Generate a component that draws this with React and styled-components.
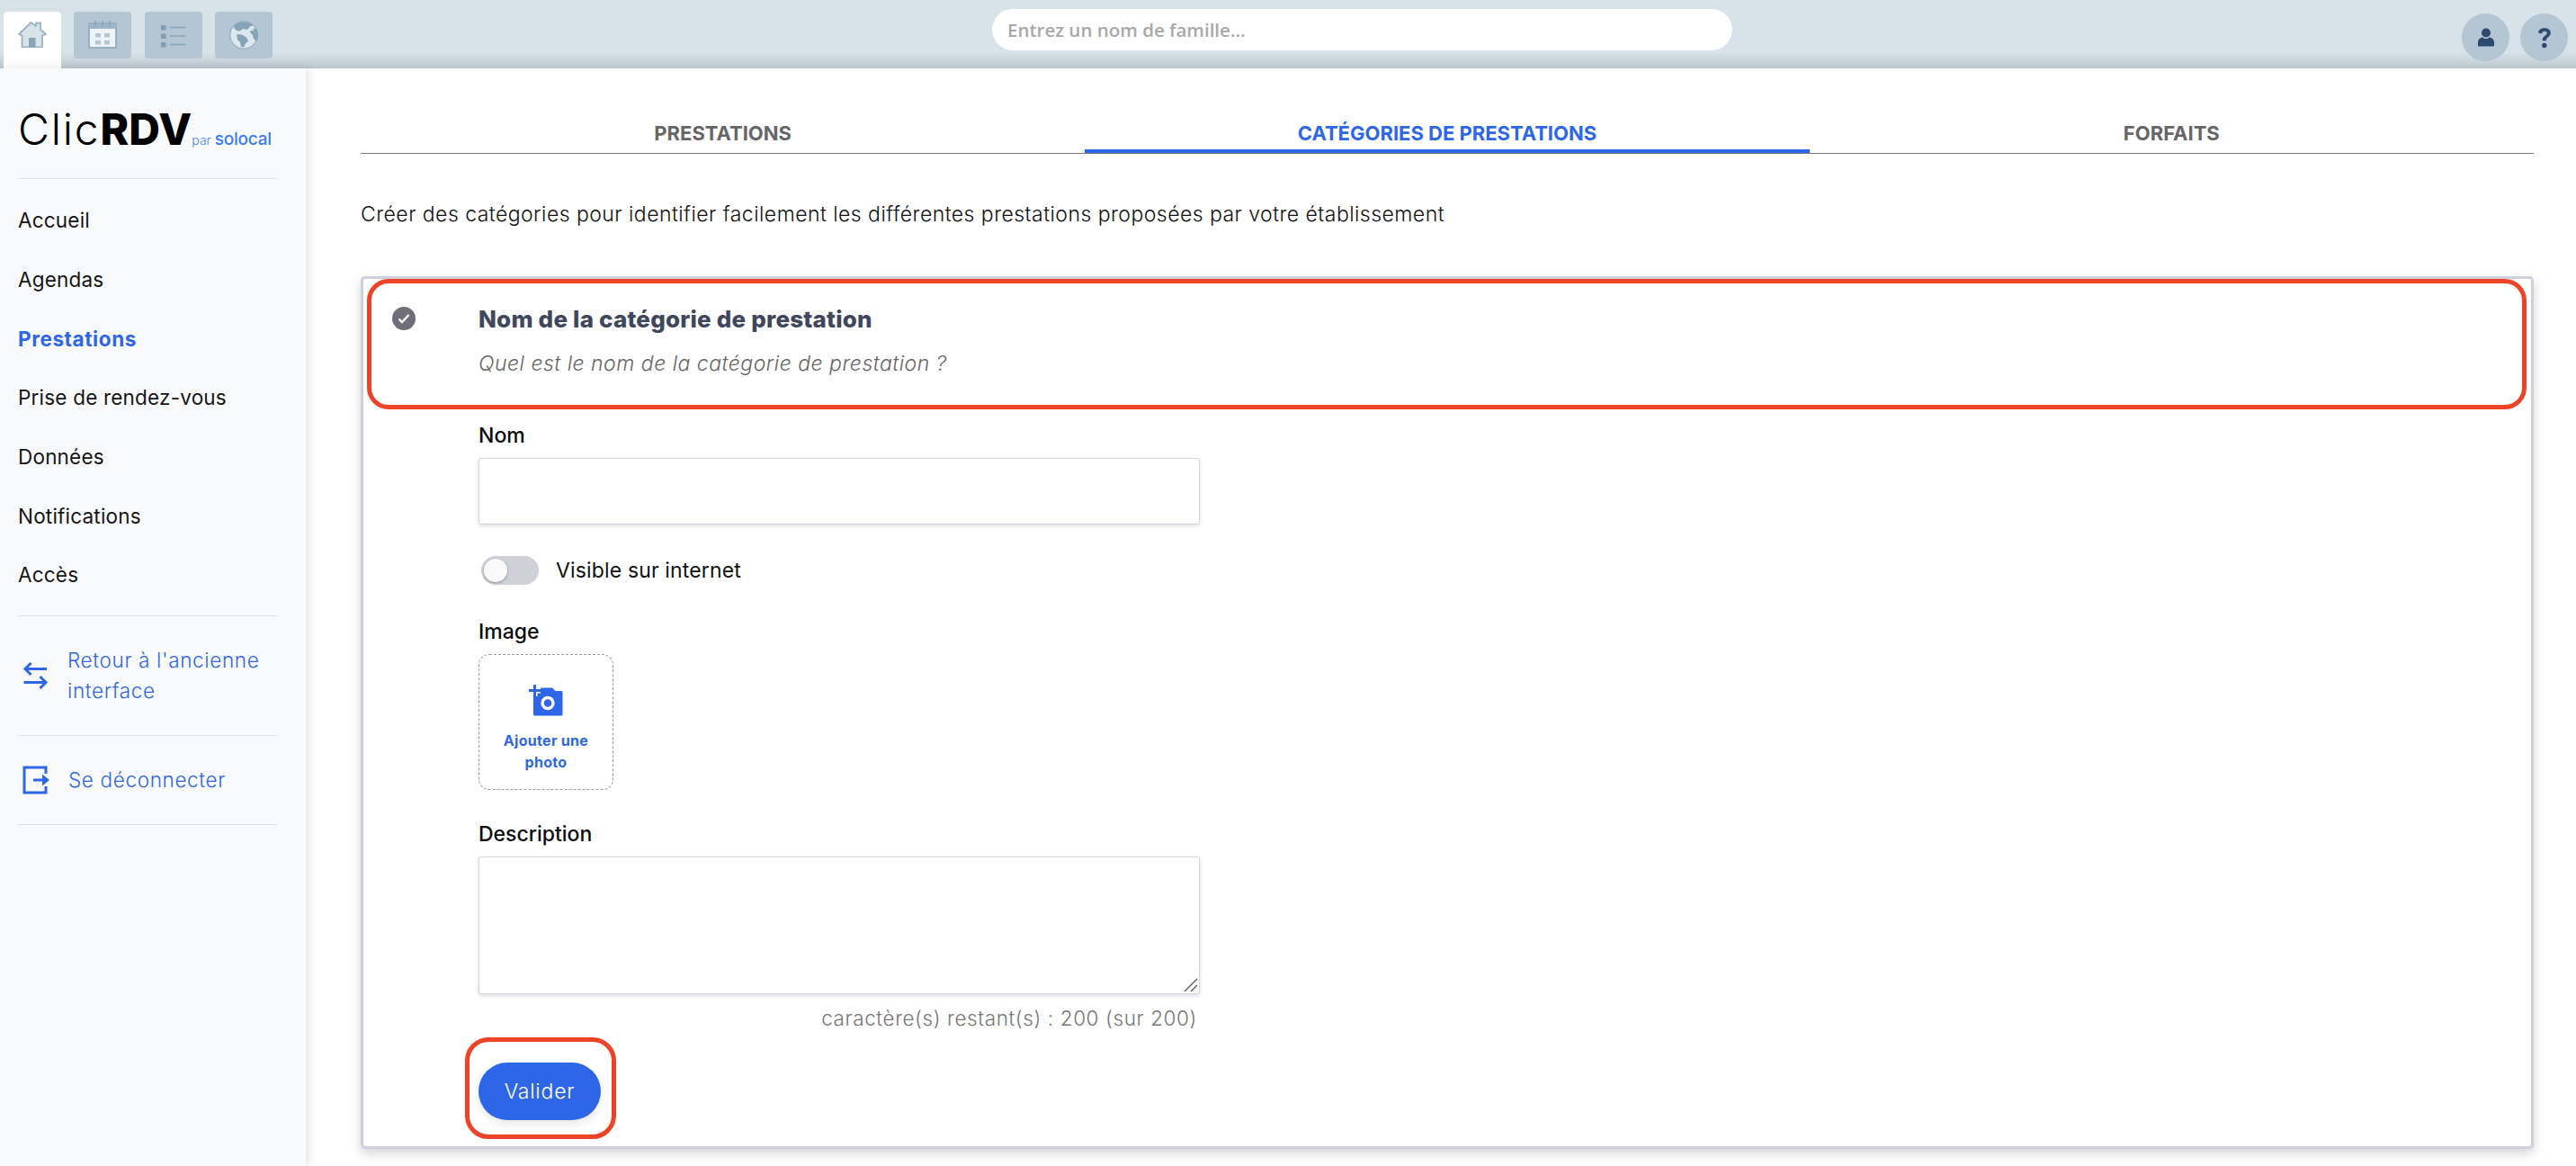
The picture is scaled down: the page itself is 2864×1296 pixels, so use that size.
import styled, { createGlobalStyle } from "styled-components";

const GlobalStyle = createGlobalStyle`
  html, body {
    margin: 0;
    padding: 0;
    background: #fff;
  }
  * {
    box-sizing: border-box;
  }
`;

const Page = styled.div`
  width: 2864px;
  height: 1296px;
  overflow: hidden;
  display: flex;
  flex-direction: column;
  font-family: Inter, "Noto Sans", sans-serif;
  color: #000;
`;

const TopBar = styled.header`
  flex: 0 0 76px;
  height: 76px;
  padding: 0 9px 0 4px;
  display: grid;
  grid-template-columns: 1099px 823px 1fr;
  background: linear-gradient(#d7e2e9 0, #d7e2e9 58px, #bcc7ce 76px);
`;

const TabIcons = styled.nav`
  display: flex;
  align-items: flex-start;
  gap: 14px;
  padding-top: 13px;
`;

const TabIcon = styled.div`
  width: 64px;
  height: ${(p) => (p.$active ? "63px" : "52px")};
  display: flex;
  align-items: flex-start;
  justify-content: center;
  padding-top: 10px;
  border-radius: ${(p) => (p.$active ? "4px 4px 0 0" : "4px")};
  background: ${(p) => (p.$active ? "#fff" : "#b4c6d3")};
  & + & + & {
    margin-left: 1px;
  }
  & + & + & + & {
    margin-left: 0;
  }
`;

const SearchWrap = styled.div`
  padding-top: 10px;
`;

const SearchBox = styled.div`
  height: 46px;
  border-radius: 23px;
  background: #fff;
  display: flex;
  align-items: center;
  padding-left: 17px;
  font-family: "Open Sans", sans-serif;
  font-size: 20.5px;
  font-weight: 600;
  color: #a8a8a8;
`;

const UserIcons = styled.div`
  display: flex;
  justify-content: flex-end;
  gap: 12px;
  padding-top: 15px;
`;

const RoundIcon = styled.div`
  width: 53px;
  height: 53px;
  border-radius: 50%;
  background: #b4c6d3;
  display: flex;
  align-items: center;
  justify-content: center;
`;

const Body = styled.div`
  flex: 1;
  display: flex;
  min-height: 0;
`;

const Sidebar = styled.aside`
  flex: 0 0 340px;
  padding: 0 32px 0 20px;
  background: #f9fafc;
  box-shadow: 3px 0 10px rgba(60, 60, 80, 0.14);
  display: flex;
  flex-direction: column;
`;

const Logo = styled.div`
  height: 123px;
  border-bottom: 1.5px solid #dfe0ea;
  display: flex;
  align-items: baseline;
  padding-top: 39px;
  font-size: 48px;
  line-height: 57px;
  white-space: nowrap;
`;

const LogoLight = styled.span`
  font-weight: 300;
  letter-spacing: 1.8px;
`;

const LogoBold = styled.span`
  font-weight: 800;
  letter-spacing: 0.2px;
`;

const LogoPar = styled.span`
  font-size: 14px;
  font-weight: 300;
  color: #4b82f0;
`;

const LogoBrand = styled.span`
  margin-left: 4px;
  font-size: 19px;
  font-weight: 500;
  letter-spacing: -0.2px;
  color: #3b7cf6;
`;

const NavList = styled.nav`
  display: flex;
  flex-direction: column;
  padding: 13px 0 12px;
  border-bottom: 1.5px solid #dfe0ea;
`;

const NavItem = styled.a`
  height: 65.7px;
  display: flex;
  align-items: center;
  font-size: 22.5px;
  letter-spacing: ${(p) => (p.$active ? "0.6px" : "0.2px")};
  font-weight: ${(p) => (p.$active ? 700 : 400)};
  color: ${(p) => (p.$active ? "#2e66e8" : "#151515")};
`;

const SideAction = styled.a`
  height: ${(p) => p.$h}px;
  display: flex;
  align-items: center;
  gap: 20px;
  padding-left: 5px;
  border-bottom: 1.5px solid #dfe0ea;
  font-size: 22.5px;
  font-weight: 300;
  line-height: 34px;
  letter-spacing: 0.65px;
  color: #2e66e8;
`;

const SideIconSlot = styled.span`
  flex: 0 0 30px;
  display: flex;
`;

const Main = styled.main`
  flex: 1;
  min-width: 0;
  padding: 50px 47px 0 61px;
`;

const Tabs = styled.div`
  display: grid;
  grid-template-columns: repeat(3, 1fr);
  border-bottom: 1.5px solid #777;
`;

const Tab = styled.div`
  height: 44px;
  margin-bottom: ${(p) => (p.$active ? "-1.5px" : "0")};
  padding-top: 7px;
  text-align: center;
  font-size: 22px;
  line-height: 30px;
  font-weight: 700;
  color: ${(p) => (p.$active ? "#2e66e8" : "#666")};
  border-bottom: ${(p) => (p.$active ? "4px solid #2e66e8" : "none")};
`;

const Intro = styled.p`
  margin: 50px 0 0;
  font-size: 23px;
  line-height: 34px;
  font-weight: 300;
  letter-spacing: 0.46px;
  color: #111;
`;

const Card = styled.section`
  margin-top: 52px;
  height: 970px;
  border: 3px solid #d0d0dc;
  border-radius: 5px;
  box-shadow: 0 5px 12px rgba(60, 60, 80, 0.22);
  background: #fff;
`;

const StepHeader = styled.div`
  position: relative;
  height: 145px;
  margin: 0 5px 0 4px;
  border: 5px solid #ee4326;
  border-radius: 24px;
  padding: 22px 0 0 119px;
`;

const StepDot = styled.div`
  position: absolute;
  left: 23px;
  top: 26px;
  width: 26px;
  height: 26px;
  border-radius: 50%;
  background: #6e6f78;
  display: flex;
  align-items: center;
  justify-content: center;
`;

const StepTitle = styled.h2`
  margin: 0;
  font-size: 26px;
  line-height: 36px;
  font-weight: 800;
  letter-spacing: 0.2px;
  color: #40475c;
`;

const StepHint = styled.p`
  margin: 14px 0 0;
  font-size: 23px;
  line-height: 34px;
  font-weight: 300;
  font-style: italic;
  letter-spacing: 0.5px;
  color: #666;
`;

const Form = styled.div`
  padding: 12px 0 0 128px;
  width: 930px;
  display: flex;
  flex-direction: column;
`;

const FieldLabel = styled.label`
  display: block;
  font-size: 23px;
  line-height: 34px;
  font-weight: 500;
  color: #0a0a0a;
`;

const TextInput = styled.div`
  margin-top: 8px;
  width: 802px;
  height: 74px;
  border: 1.5px solid #d5d5e0;
  border-radius: 3px;
  box-shadow: 0 2px 4px rgba(60, 60, 80, 0.14);
  background: #fff;
`;

const ToggleRow = styled.div`
  margin-top: 34px;
  display: flex;
  align-items: center;
  gap: 19px;
  padding-left: 3px;
`;

const ToggleTrack = styled.div`
  width: 64px;
  height: 32px;
  padding: 3px;
  border-radius: 16px;
  background: #d0d0d9;
`;

const ToggleKnob = styled.div`
  width: 26px;
  height: 26px;
  border-radius: 50%;
  background: #f9f9f9;
  box-shadow: 0 1px 3px rgba(0, 0, 0, 0.3);
`;

const ToggleLabel = styled.span`
  font-size: 23px;
  line-height: 34px;
  font-weight: 400;
  letter-spacing: 0.15px;
  color: #111;
`;

const ImageLabel = styled(FieldLabel)`
  margin-top: 34px;
`;

const PhotoDrop = styled.div`
  margin-top: 8px;
  width: 150px;
  height: 151px;
  border: 1.5px dashed #999;
  border-radius: 12px;
  display: flex;
  flex-direction: column;
  align-items: center;
  padding-top: 32px;
`;

const PhotoText = styled.div`
  margin-top: 15px;
  text-align: center;
  font-size: 16px;
  line-height: 24px;
  font-weight: 700;
  letter-spacing: 0.3px;
  color: #2e66e8;
`;

const DescriptionLabel = styled(FieldLabel)`
  margin-top: 32px;
`;

const TextArea = styled.div`
  position: relative;
  margin-top: 8px;
  width: 802px;
  height: 153px;
  border: 1.5px solid #d5d5e0;
  border-radius: 3px;
  box-shadow: 0 2px 4px rgba(60, 60, 80, 0.18);
  background: #fff;
`;

const Grip = styled.svg`
  position: absolute;
  right: 1px;
  bottom: 1px;
`;

const Counter = styled.div`
  width: 799px;
  margin-top: 10px;
  text-align: right;
  font-size: 22.5px;
  line-height: 34px;
  font-weight: 300;
  letter-spacing: 0.6px;
  color: #777;
`;

const ButtonFrame = styled.div`
  margin: 4px 0 0 -15px;
  width: 168px;
  height: 113px;
  border: 5px solid #ee4326;
  border-radius: 26px;
  padding: 23px 0 0 10px;
`;

const SubmitButton = styled.button`
  width: 136px;
  height: 64px;
  border: 0;
  border-radius: 32px;
  background: #2e66e8;
  color: #fff;
  font-family: inherit;
  font-size: 23px;
  font-weight: 300;
  letter-spacing: 0.8px;
  box-shadow: 0 4px 10px rgba(60, 60, 80, 0.12);
`;

const HomeIcon = () => (
  <svg width="32" height="30" viewBox="0 0 32 30">
    <path d="M1 15 14.500 2 20 6V2.500h5V10l6 5-4 1.500v13H4.500v-13z" fill="#d7e2e9" stroke="#9ab3c5" strokeWidth="1.800" strokeLinejoin="round" />
    <rect x="12" y="19" width="7.500" height="10.500" fill="#86a3b8" />
  </svg>
);

const CalendarIcon = () => (
  <svg width="32" height="31" viewBox="0 0 32 31">
    <rect x="1" y="3" width="30" height="27" fill="#eef3f7" stroke="#8aa5b9" strokeWidth="1.600" />
    <rect x="1" y="3" width="30" height="6" fill="#9db5c6" />
    <path d="M8 0v6.500M16 0v6.500M24 0v6.500" stroke="#8aa5b9" strokeWidth="1.600" />
    <path d="M8 14h6v4.500H8zM18 14h6v4.500h-6zM8 22h6v4.500H8zM18 22h6v4.500h-6z" fill="#b4c6d3" />
  </svg>
);

const ListIcon = () => (
  <svg width="30" height="32" viewBox="0 0 30 32" style={{ marginTop: 1 }}>
    <path d="M1 4h5.500v5.500H1zM1 13.500h5.500V19H1zM1 23h5.500v5.500H1z" fill="#7f9db3" />
    <path d="M11 6.500h17.500M11 16h17.500M11 25.500h17.500" stroke="#86a3b8" strokeWidth="1.500" />
  </svg>
);

const GlobeIcon = () => (
  <svg width="32" height="32" viewBox="0 0 32 32">
    <circle cx="16" cy="16" r="15.300" fill="#dde7ee" stroke="#8aa5b9" strokeWidth="1" />
    <path d="M6 4.500C10 .5 21-.5 27 5l-4 1.500-3 3.500-5-1-3 2.500-4-.5-3-3z" fill="#86a3b8" />
    <path d="M8 15l6 .5 5 3 2 4-3 3-2 4-3-.5-1-5-3-3z" fill="#86a3b8" />
    <path d="M24 10l6-1.500c1.500 2.500 2 5 2 7.500 0 3-1 5.500-2 7l-3-3-1-4-3-3z" fill="#86a3b8" />
    <path d="M23 10.500h4" stroke="#dde7ee" strokeWidth="1.200" />
  </svg>
);

const UserIcon = () => (
  <svg width="18" height="22" viewBox="0 0 18 22">
    <circle cx="9" cy="5.500" r="5" fill="#2a4a6e" />
    <path d="M1 20.500c-.8 0-1-.6-1-1.500v-3c0-3 2.500-5.200 5.500-5.600C6.500 11.500 7.500 12 9 12s2.500-.5 3.500-1.600c3 .4 5.500 2.600 5.500 5.600v3c0 .9-.2 1.500-1 1.500z" fill="#2a4a6e" />
  </svg>
);

const HelpIcon = () => (
  <svg width="16" height="24" viewBox="0 0 16 24">
    <path d="M1.500 6.500C1.500 3.200 4.300 1.500 8 1.500s6.500 1.800 6.500 5c0 4.800-5 4.500-5 8.500H6c0-5.500 5-5.300 5-8.500 0-1.200-1.200-2-3-2s-3 .8-3 2.500z" fill="#2a4a6e" stroke="#2a4a6e" strokeWidth="0.600" />
    <circle cx="7.800" cy="20.500" r="2.700" fill="#2a4a6e" />
  </svg>
);

const SwapIcon = () => (
  <svg width="29" height="30" viewBox="0 0 29 30">
    <path d="M27 7.500H3M9.500 1 3 7.500 9.500 14M1.500 22.500H26M19.500 16 26 22.500 19.500 29" fill="none" stroke="#2e66e8" strokeWidth="3" />
  </svg>
);

const LogoutIcon = () => (
  <svg width="31" height="32" viewBox="0 0 31 32">
    <path d="M26 9V2H2v28h24v-7" fill="none" stroke="#2e66e8" strokeWidth="3" />
    <path d="M12 16h11" stroke="#2e66e8" strokeWidth="3" />
    <path d="M22 9.500 30 16l-8 6.500z" fill="#2e66e8" />
  </svg>
);

const CheckIcon = () => (
  <svg width="14" height="12" viewBox="0 0 14 12">
    <path d="M1.500 6.500 5 10l7.500-8" fill="none" stroke="#fff" strokeWidth="2.400" />
  </svg>
);

const CameraPlusIcon = () => (
  <svg width="38" height="36" viewBox="0 0 38 36">
    <path d="M5 7.500h5l3-3h13l3.500 3.500H36a1.500 1.500 0 0 1 1.500 1.500V34a1.500 1.500 0 0 1-1.500 1.500H6.500A1.500 1.500 0 0 1 5 34z" fill="#2e66e8" />
    <circle cx="21" cy="21.500" r="6" fill="none" stroke="#fff" strokeWidth="3.400" />
    <path d="M0 7.500h13M6.500 1v13" stroke="#fff" strokeWidth="6" />
    <path d="M0 7.500h13M6.500 1v13" stroke="#2e66e8" strokeWidth="3" />
  </svg>
);

const navItems = ["Accueil", "Agendas", "Prestations", "Prise de rendez-vous", "Données", "Notifications", "Accès"];

const App = () => {
  return (
    <Page>
      <GlobalStyle />
      <TopBar>
        <TabIcons>
          <TabIcon $active><HomeIcon /></TabIcon>
          <TabIcon><CalendarIcon /></TabIcon>
          <TabIcon><ListIcon /></TabIcon>
          <TabIcon><GlobeIcon /></TabIcon>
        </TabIcons>
        <SearchWrap>
          <SearchBox>Entrez un nom de famille...</SearchBox>
        </SearchWrap>
        <UserIcons>
          <RoundIcon><UserIcon /></RoundIcon>
          <RoundIcon><HelpIcon /></RoundIcon>
        </UserIcons>
      </TopBar>

      <Body>
        <Sidebar>
          <Logo>
            <LogoLight>Clic</LogoLight>
            <LogoBold>RDV</LogoBold>
            <LogoPar>par</LogoPar>
            <LogoBrand>solocal</LogoBrand>
          </Logo>
          <NavList>
            {navItems.map((item) => (
              <NavItem key={item} $active={item === "Prestations"}>{item}</NavItem>
            ))}
          </NavList>
          <SideAction $h={133}>
            <SideIconSlot><SwapIcon /></SideIconSlot>
            <span>Retour à l'ancienne<br />interface</span>
          </SideAction>
          <SideAction $h={99}>
            <SideIconSlot><LogoutIcon /></SideIconSlot>
            <span>Se déconnecter</span>
          </SideAction>
        </Sidebar>

        <Main>
          <Tabs>
            <Tab>PRESTATIONS</Tab>
            <Tab $active>CATÉGORIES DE PRESTATIONS</Tab>
            <Tab>FORFAITS</Tab>
          </Tabs>
          <Intro>Créer des catégories pour identifier facilement les différentes prestations proposées par votre établissement</Intro>

          <Card>
            <StepHeader>
              <StepDot><CheckIcon /></StepDot>
              <StepTitle>Nom de la catégorie de prestation</StepTitle>
              <StepHint>Quel est le nom de la catégorie de prestation ?</StepHint>
            </StepHeader>
            <Form>
              <FieldLabel>Nom</FieldLabel>
              <TextInput />
              <ToggleRow>
                <ToggleTrack><ToggleKnob /></ToggleTrack>
                <ToggleLabel>Visible sur internet</ToggleLabel>
              </ToggleRow>
              <ImageLabel>Image</ImageLabel>
              <PhotoDrop>
                <CameraPlusIcon />
                <PhotoText>Ajouter une<br />photo</PhotoText>
              </PhotoDrop>
              <DescriptionLabel>Description</DescriptionLabel>
              <TextArea>
                <Grip width="16" height="16" viewBox="0 0 16 16">
                  <path d="M1 15 15 1M8 15l7-7" stroke="#555" strokeWidth="1.300" />
                </Grip>
              </TextArea>
              <Counter>caractère(s) restant(s) : 200 (sur 200)</Counter>
              <ButtonFrame>
                <SubmitButton>Valider</SubmitButton>
              </ButtonFrame>
            </Form>
          </Card>
        </Main>
      </Body>
    </Page>
  );
};

export default App;
